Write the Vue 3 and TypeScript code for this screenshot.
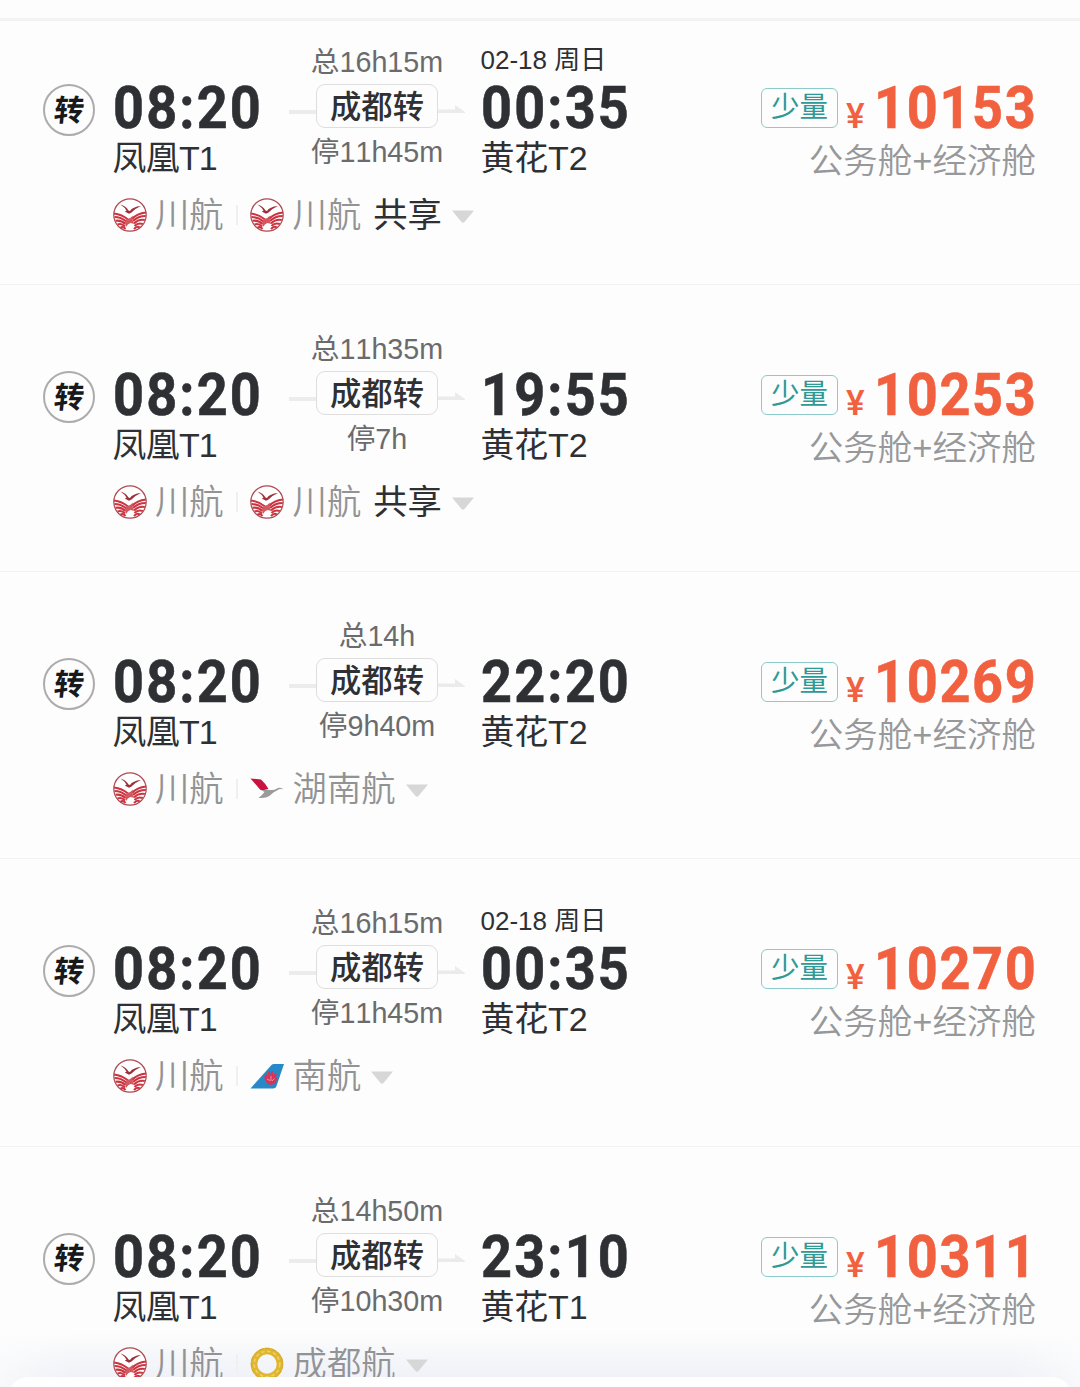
<script setup lang="ts">
type Logo = 'sichuan' | 'hunan' | 'southern' | 'chengdu'

interface Flight {
  total: string
  stop: string
  date?: string
  arrive: string
  airport: string
  price: string
  second: { logo: Logo; name: string }
  shared?: boolean
}

const flights: Flight[] = [
  { total: '总16h15m', stop: '停11h45m', date: '02-18 周日', arrive: '00:35', airport: '黄花T2', price: '10153', second: { logo: 'sichuan', name: '川航' }, shared: true },
  { total: '总11h35m', stop: '停7h', arrive: '19:55', airport: '黄花T2', price: '10253', second: { logo: 'sichuan', name: '川航' }, shared: true },
  { total: '总14h', stop: '停9h40m', arrive: '22:20', airport: '黄花T2', price: '10269', second: { logo: 'hunan', name: '湖南航' } },
  { total: '总16h15m', stop: '停11h45m', date: '02-18 周日', arrive: '00:35', airport: '黄花T2', price: '10270', second: { logo: 'southern', name: '南航' } },
  { total: '总14h50m', stop: '停10h30m', arrive: '23:10', airport: '黄花T1', price: '10311', second: { logo: 'chengdu', name: '成都航' } },
]

const carriers = (f: Flight): { logo: Logo; name: string }[] => [{ logo: 'sichuan', name: '川航' }, f.second]
</script>

<template>
  <main class="page">
    <div class="sheet-shade"></div>
    <div class="topline"></div>
    <article v-for="(f, i) in flights" :key="i" class="flight">
      <div class="summary">
        <div class="badge"><span>转</span></div>
        <div class="depart">
          <div class="note"></div>
          <div class="time">08:20</div>
          <div class="airport">凤凰T1</div>
        </div>
        <div class="transit">
          <div class="duration">{{ f.total }}</div>
          <div class="via">
            <i class="line"></i>
            <span class="pill">成都转</span>
            <svg class="arrow" width="27" height="10" viewBox="0 0 27 10"><path d="M0 4.500H17V0L27 7V8H0Z" fill="#ebebeb" /></svg>
          </div>
          <div class="duration stop">{{ f.stop }}</div>
        </div>
        <div class="arrival">
          <div class="note">{{ f.date }}</div>
          <div class="time">{{ f.arrive }}</div>
          <div class="airport">{{ f.airport }}</div>
        </div>
        <div class="fare">
          <div class="amount">
            <span class="tag">少量</span>
            <span class="yen">¥</span>
            <span class="price">{{ f.price }}</span>
          </div>
          <div class="cabin">公务舱+经济舱</div>
        </div>
      </div>
      <div class="carriers">
        <template v-for="(c, j) in carriers(f)" :key="j">
          <i v-if="j > 0" class="sep"></i>
          <svg v-if="c.logo === 'sichuan'" class="logo" viewBox="0 0 34 34">
            <circle cx="17" cy="17" r="16.2" fill="#fff" />
            <g fill="none" stroke="#cb3440" stroke-width="2.1">
              <path d="M1 15.500Q9 16.500 15 21.500" />
              <path d="M1.500 19Q8 19 13.500 23.500" />
              <path d="M2.500 22.800Q8 21.800 12.500 26" />
              <path d="M4.500 26.500Q8.500 24.800 12 28.500" />
              <path d="M7.500 29.800Q10 28 12.500 31" />
              <path d="M33 14.500Q24 15.500 19 21" />
              <path d="M32.800 18Q25 18 20 23" />
              <path d="M31.800 22Q25.500 21 21 25.500" />
              <path d="M29.800 26Q25 24.300 21.500 28" />
              <path d="M26.800 29.500Q24 27.500 21 31" />
            </g>
            <path d="M13.500 21.500Q17.500 20.500 20 17.500Q18.500 22 21.500 26L17.500 25Q15 25.500 13 29L12 25Z" fill="#d35860" />
            <path d="M7.500 6.500Q13 8 15.500 12.500L17 13Q19.500 8.800 28 8Q23 10 18.500 14.500L16 15.800L11.800 13.500L13.500 12.800Q12 9.500 7.500 6.500Z" fill="#9e3039" />
            <circle cx="17" cy="17" r="16.200" fill="none" stroke="#b0484f" stroke-width="1.200" />
          </svg>
          <svg v-else-if="c.logo === 'hunan'" class="logo" viewBox="0 0 34 34">
            <path d="M.5 6.500L11 7.500Q16 12 18.500 17L14 18H10.500Z" fill="#c9123f" />
            <path d="M11 18Q17 18 21 18Q24 18.500 27 16.500Q29 14.800 33.500 17.200Q29 16.500 27 18.500Q23 20 20.500 23Q17.500 26.500 8.500 26Q12 23.500 14.500 20Z" fill="#9a9a9a" />
          </svg>
          <svg v-else-if="c.logo === 'southern'" class="logo" viewBox="0 0 34 34">
            <path d="M.5 29.500L21.500 6Q22.500 5 24 5H34L26.500 27Q26 29 23.500 29.500Z" fill="#2789c7" />
            <path d="M17 24.500L14.500 19.500Q14 16 16 15L18 17.500L17.500 13L20 12L20.500 16.500L21.500 12L23.500 12.500L22.800 16.500L25.500 14L27 16L25 19L27.500 19L25.500 24L21 26Z" fill="#d83358" />
            <path d="M17 20L20 21.500M21 17V22M24.500 19.500L22 22" stroke="#eb9bb0" stroke-width=".9" fill="none" />
          </svg>
          <svg v-else class="logo" viewBox="0 0 34 34">
            <circle cx="17" cy="17" r="13" fill="none" stroke="#e0b62f" stroke-width="6.600" />
            <circle cx="17" cy="17" r="12.800" fill="none" stroke="#eccf68" stroke-width="1.600" stroke-dasharray="3.500 2.500" />
            <circle cx="17" cy="17" r="15.700" fill="none" stroke="#d3a72c" stroke-width="1" stroke-dasharray="5 1.500" />
          </svg>
          <span class="name">{{ c.name }}</span>
        </template>
        <span v-if="f.shared" class="shared">共享</span>
        <svg class="caret" width="22" height="13" viewBox="0 0 22 13"><path d="M0 .5H22L12.500 12Q11 13.500 9.500 12Z" fill="#d7d7d7" /></svg>
      </div>
    </article>
    <div class="sheet"></div>
  </main>
</template>

<style>
body {
  margin: 0;
  background: #fdfdfd;
}
</style>

<style scoped>
.page {
  position: relative;
  width: 1080px;
  height: 1387px;
  overflow: hidden;
  background: #fdfdfd;
  font-family: 'Liberation Sans', 'Noto Sans CJK SC', sans-serif;
  font-kerning: none;
  color: #2e3033;
  white-space: nowrap;
}
.topline {
  box-sizing: border-box;
  height: 21px;
  border-bottom: 3px solid #f3f3f3;
}
.flight {
  position: relative;
  box-sizing: border-box;
  height: 287.2px;
  padding: 46px 44px 0 43px;
  border-bottom: 1px solid #f1f1f1;
}
.topline + .flight {
  height: 264px;
  padding-top: 23px;
}
.summary {
  display: flex;
  height: 134px;
}
.badge {
  box-sizing: border-box;
  flex: none;
  width: 52px;
  height: 52px;
  margin: 40px 18px 0 0;
  border: 2px solid #acacac;
  border-radius: 50%;
  display: flex;
  align-items: center;
  justify-content: center;
  font-size: 30px;
  font-weight: 700;
  line-height: 48px;
  color: #17191b;
}
.badge span {
  padding-top: 1px;
  transform: skewX(-6deg);
}
.depart {
  width: 176px;
}
.note {
  height: 34px;
  font-size: 26px;
  line-height: 32px;
}
.arrival .note {
  text-indent: -0.5px;
}
.time,
.price,
.yen {
  font-family: Roboto, sans-serif;
  font-weight: 700;
}
.time,
.price {
  -webkit-text-stroke: 0.6px currentColor;
}
.time {
  height: 60px;
  font-size: 60px;
  line-height: 60px;
  letter-spacing: 2.4px;
  transform: scaleX(0.9);
  transform-origin: left;
}
.airport {
  height: 40px;
  font-size: 34px;
  line-height: 40px;
  letter-spacing: -0.2px;
  text-indent: -0.5px;
}
.depart .airport {
  letter-spacing: -0.8px;
}
.transit {
  width: 176px;
  margin-right: 16px;
  text-align: center;
}
.duration {
  height: 40px;
  font-size: 28.7px;
  line-height: 37px;
  color: #6a6b6d;
}
.stop {
  line-height: 49px;
}
.via {
  display: flex;
  align-items: center;
  height: 44px;
}
.line {
  width: 27px;
  height: 4px;
  margin-top: 12px;
  background: #ececec;
}
.arrow {
  margin-top: 8px;
}
.pill {
  box-sizing: border-box;
  width: 122px;
  height: 44px;
  border: 1px solid #dedede;
  border-radius: 9px;
  font-size: 31.3px;
  font-weight: 500;
  line-height: 45px;
}
.fare {
  width: 275px;
  margin-left: auto;
  padding-top: 34px;
}
.amount {
  display: flex;
  height: 60px;
  color: #f1603f;
}
.tag {
  box-sizing: border-box;
  flex: none;
  width: 77px;
  height: 40px;
  margin-top: 10px;
  border: 1px solid #8ccbc9;
  border-radius: 6px;
  font-size: 28.5px;
  line-height: 36px;
  text-align: center;
  color: #2f9996;
}
.yen {
  flex: none;
  width: 20px;
  margin-left: 8px;
  font-size: 35px;
  font-weight: 500;
  line-height: 77px;
}
.price {
  flex: none;
  width: 162px;
  margin-left: 8px;
  font-size: 60px;
  line-height: 60px;
  letter-spacing: 1.9px;
  transform: scaleX(0.9);
  transform-origin: left;
}
.cabin {
  height: 40px;
  font-size: 34.5px;
  font-weight: 350;
  line-height: 46px;
  text-align: right;
  color: #97989a;
}
.carriers {
  display: flex;
  align-items: center;
  height: 40px;
  margin: 17px 0 0 70px;
  font-size: 34.3px;
  line-height: 40px;
}
.logo {
  width: 34px;
  height: 34px;
  margin-right: 8px;
}
.name {
  font-weight: 350;
  color: #929395;
}
.sep {
  width: 2px;
  height: 20px;
  margin: 0 12px 0 12px;
  background: #f0f0f0;
}
.sep + .logo {
  margin-right: 9px;
}
.shared {
  margin-left: 12px;
}
.caret {
  margin: 3px 0 0 10px;
}
.sheet-shade {
  position: absolute;
  inset: 1332px 0 0;
  background: linear-gradient(to bottom, rgba(226, 230, 242, 0), rgba(226, 230, 242, 0.6));
  -webkit-mask-image: linear-gradient(to right, rgba(0, 0, 0, 0.3), #000 70px, #000 1010px, rgba(0, 0, 0, 0.3));
  mask-image: linear-gradient(to right, rgba(0, 0, 0, 0.3), #000 70px, #000 1010px, rgba(0, 0, 0, 0.3));
}
.sheet {
  position: absolute;
  inset: 1377px 8px -30px;
  border-radius: 22px;
  background: #fefefe;
}
</style>
